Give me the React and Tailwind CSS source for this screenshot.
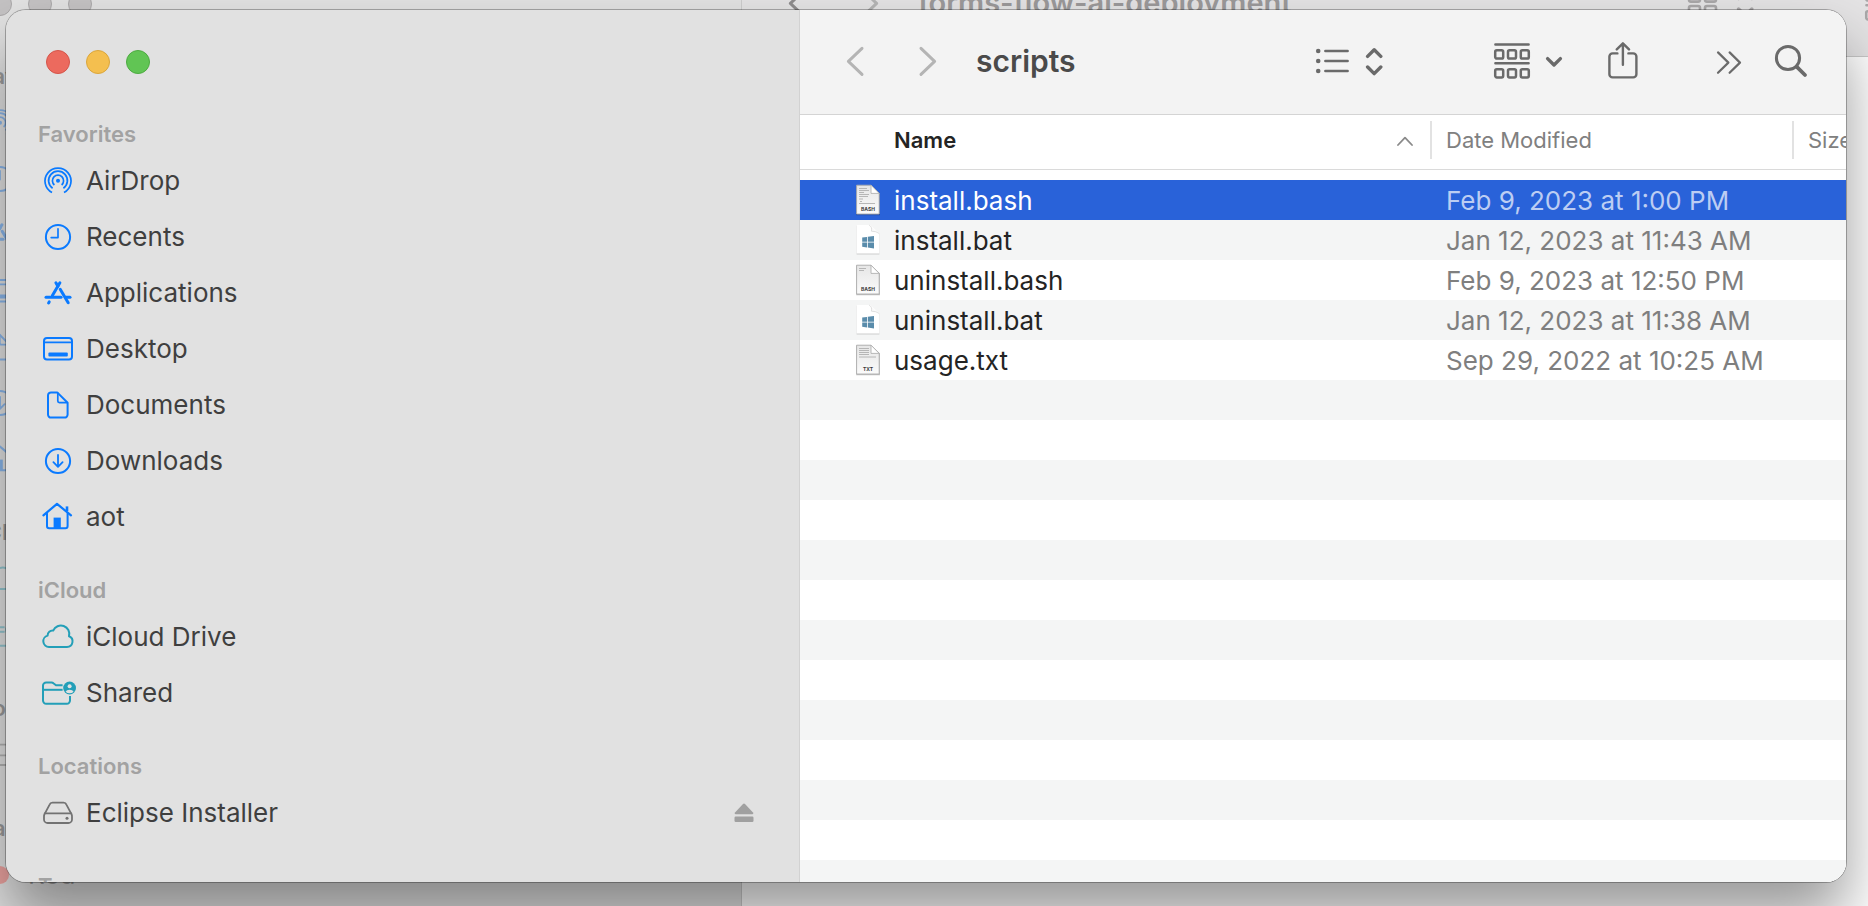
import React from "react";

const FONT = "font-['Inter','Noto_Sans',sans-serif]";

/* ---------- sidebar icons (36 x 36 box) ---------- */

function Glyph({ children, className }) {
  return (
    <svg
      viewBox="0 0 36 36"
      className={`h-9 w-9 shrink-0 ${className}`}
      fill="none"
      stroke="currentColor"
      strokeWidth="2"
      strokeLinecap="round"
      strokeLinejoin="round"
      aria-hidden="true"
    >
      {children}
    </svg>
  );
}

const AirDropIcon = (p) => (
  <Glyph {...p}>
    <g strokeWidth="1.7" strokeLinecap="butt">
      <path d="M12 29.6A13 13 0 1 1 24 29.6" />
      <path d="M12.6 25.3A9.4 9.4 0 1 1 23.4 25.3" />
      <path d="M14.4 22A5.6 5.6 0 1 1 21.6 22" />
    </g>
    <circle cx="18" cy="17.8" r="2" fill="currentColor" stroke="none" />
  </Glyph>
);

const RecentsIcon = (p) => (
  <Glyph {...p}>
    <circle cx="18" cy="18" r="12.1" />
    <path d="M18 9.8V18.6H11.2" strokeWidth="1.7" />
  </Glyph>
);

const ApplicationsIcon = (p) => (
  <Glyph {...p}>
    <g strokeWidth="3">
      <path d="M19.9 7.8 12.4 20.6" />
      <path d="M15.9 7.8 17.9 11.2" />
      <path d="M6 22.2H21" />
      <path d="M20.2 14.2 28.2 27.8" />
      <path d="M25.8 22.2H30" />
      <path d="M9.2 26.9 8.6 27.9" />
    </g>
  </Glyph>
);

const DesktopIcon = (p) => (
  <Glyph {...p}>
    <rect x="4" y="7" width="28" height="21.6" rx="3" />
    <path d="M4 11.4H32" strokeWidth="1.6" />
    <rect x="8.4" y="21.4" width="19.4" height="4" rx="1" fill="currentColor" stroke="none" />
  </Glyph>
);

const DocumentsIcon = (p) => (
  <Glyph {...p}>
    <path d="M11 5.4H17.2L27.6 15.8V27.6A3 3 0 0 1 24.6 30.6H11A3 3 0 0 1 8 27.6V8.4A3 3 0 0 1 11 5.4Z" />
    <path d="M17.8 6V14A1.6 1.6 0 0 0 19.4 15.6H27" strokeWidth="1.7" />
  </Glyph>
);

const DownloadsIcon = (p) => (
  <Glyph {...p}>
    <circle cx="18" cy="18" r="12.1" />
    <path d="M18 12V23.4M13.4 19.2 18 23.8 22.6 19.2" strokeWidth="1.8" />
  </Glyph>
);

const HomeIcon = (p) => (
  <Glyph {...p}>
    <path d="M3.4 16.4 17 4.8 31 16.4" strokeWidth="2.2" />
    <path d="M7 14.6V27A2.2 2.2 0 0 0 9.2 29.2H25.4A2.2 2.2 0 0 0 27.6 27V14.6" />
    <path d="M27 7.4V12" strokeWidth="2.6" strokeLinecap="butt" />
    <path d="M13.6 29V18.6H20.8V29Z" fill="currentColor" stroke="none" />
  </Glyph>
);

const CloudIcon = (p) => (
  <Glyph {...p}>
    <path d="M9 28H27A5.6 5.6 0 0 0 29 17.2 8.4 8.4 0 0 0 13.2 11.6 5 5 0 0 0 7.6 16.6 5.8 5.8 0 0 0 9 28Z" />
  </Glyph>
);

const SharedIcon = (p) => (
  <Glyph {...p}>
    <path
      d="M22.6 10.2H16L13.4 8.2A3 3 0 0 0 11.6 7.4H6.2A3.2 3.2 0 0 0 3 10.6V25.6A3.2 3.2 0 0 0 6.2 28.8H26.8A3.2 3.2 0 0 0 30 25.6V21"
      strokeLinecap="butt"
    />
    <path d="M3 14.8H22.6" strokeLinecap="butt" />
    <circle cx="29.6" cy="13" r="6.4" fill="currentColor" stroke="none" />
    <circle cx="29.6" cy="11.2" r="2" fill="#e1e1e1" stroke="none" />
    <path d="M25.6 16.8A4.2 3 0 0 1 33.6 16.8 6 6 0 0 1 25.6 16.8Z" fill="#e1e1e1" stroke="none" />
  </Glyph>
);

const DriveIcon = (p) => (
  <Glyph {...p}>
    <path
      d="M12.4 7.6H23.6A3 3 0 0 1 26.4 9.6L31.6 19.4A5 5 0 0 1 32 21.6V24.4A3.6 3.6 0 0 1 28.4 28H7.6A3.6 3.6 0 0 1 4 24.4V21.6A5 5 0 0 1 4.4 19.4L9.6 9.6A3 3 0 0 1 12.4 7.6Z"
      strokeWidth="1.8"
    />
    <path d="M4.6 18.4H31.4" strokeWidth="1.6" />
    <circle cx="27" cy="23.2" r="1.5" fill="currentColor" stroke="none" />
  </Glyph>
);

const RedTagIcon = (p) => (
  <Glyph {...p}>
    <circle cx="18" cy="18" r="9" fill="currentColor" stroke="none" />
  </Glyph>
);

/* ---------- sidebar ---------- */

const SECTIONS = [
  {
    title: "Favorites",
    items: [
      { label: "AirDrop", Icon: AirDropIcon, tone: "text-[#0a7aff]" },
      { label: "Recents", Icon: RecentsIcon, tone: "text-[#0a7aff]" },
      { label: "Applications", Icon: ApplicationsIcon, tone: "text-[#0a7aff]" },
      { label: "Desktop", Icon: DesktopIcon, tone: "text-[#0a7aff]" },
      { label: "Documents", Icon: DocumentsIcon, tone: "text-[#0a7aff]" },
      { label: "Downloads", Icon: DownloadsIcon, tone: "text-[#0a7aff]" },
      { label: "aot", Icon: HomeIcon, tone: "text-[#0a7aff]" },
    ],
  },
  {
    title: "iCloud",
    items: [
      { label: "iCloud Drive", Icon: CloudIcon, tone: "text-[#239fb8]" },
      { label: "Shared", Icon: SharedIcon, tone: "text-[#239fb8]" },
    ],
  },
  {
    title: "Locations",
    items: [
      { label: "Eclipse Installer", Icon: DriveIcon, tone: "text-[#727272]", ejectable: true },
    ],
  },
  {
    title: "Tags",
    items: [{ label: "Red", Icon: RedTagIcon, tone: "text-[#ff4a42]" }],
  },
];

/* The window behind lists the same places; only the tag name shows past the front window. */
const BACK_SECTIONS = SECTIONS.map((section) => ({
  ...section,
  items: section.items.map((item) => ({
    ...item,
    iconOnly: section.title !== "Tags",
    ejectable: false,
  })),
}));

function TrafficLights({ active }) {
  const lights = active
    ? ["bg-[#ec6a5e] border-[#d5554a]", "bg-[#f4bf4f] border-[#dba63b]", "bg-[#61c554] border-[#4dab41]"]
    : ["bg-[#c4c2c3] border-[#aaa8a9]", "bg-[#c4c2c3] border-[#aaa8a9]", "bg-[#c4c2c3] border-[#aaa8a9]"];
  const names = ["Close", "Minimize", "Zoom"];
  return (
    <div className="flex h-[105px] shrink-0 items-center gap-4 pb-0.5 pl-10">
      {names.map((name, i) => (
        <button key={name} aria-label={name} className={`h-6 w-6 rounded-full border ${lights[i]}`} />
      ))}
    </div>
  );
}

function Sidebar({ active }) {
  const sections = active ? SECTIONS : BACK_SECTIONS;
  return (
    <aside
      className={`flex w-[794px] shrink-0 flex-col overflow-hidden border-r ${
        active ? "border-[#d2d2d2] bg-[#e1e1e1]" : "border-[#cccccc] bg-[#e2e2e2]"
      }`}
    >
      <TrafficLights active={active} />
      <nav className={`flex flex-col gap-[26px] ${active ? "" : "opacity-40"}`}>
        {sections.map((section) => (
          <section key={section.title}>
            <h2
              className={`h-[38px] pl-8 text-[22px] leading-[38px] font-semibold ${
                active ? "text-[#a2a2a2]" : "text-[#333333]"
              }`}
            >
              {section.title}
            </h2>
            <ul>
              {section.items.map(({ label, Icon, tone, ejectable, iconOnly }) => (
                <li key={label} className="flex h-14 items-center justify-between pr-[45px] pl-[34px]">
                  <a
                    href="#"
                    aria-label={label}
                    className="flex items-center gap-2.5 text-[26px] leading-8 text-[#3f3f3f]"
                  >
                    <Icon className={tone} />
                    {!iconOnly && label}
                  </a>
                  {ejectable && (
                    <button aria-label={`Eject ${label}`} className="text-[#a0a0a0]">
                      <svg viewBox="0 0 20 20" className="h-5 w-5" fill="currentColor" aria-hidden="true">
                        <path d="M9 1Q10 0 11 1L19 9.4Q20 11 18.4 11.2H1.6Q0 11 1 9.4Z" />
                        <rect x="0.5" y="13.6" width="19" height="5.4" rx="1.2" />
                      </svg>
                    </button>
                  )}
                </li>
              ))}
            </ul>
          </section>
        ))}
      </nav>
    </aside>
  );
}

/* ---------- toolbar ---------- */

function Stroke({ box, className, width = 3, children }) {
  return (
    <svg
      viewBox={box}
      className={`shrink-0 ${className}`}
      fill="none"
      stroke="currentColor"
      strokeWidth={width}
      strokeLinecap="round"
      strokeLinejoin="round"
      aria-hidden="true"
    >
      {children}
    </svg>
  );
}

const ListViewIcon = () => (
  <Stroke box="0 0 36 28" className="h-7 w-9" width={2.6}>
    <path d="M10.4 3H32.6M10.4 13H32.6M10.4 23H32.6" />
    <g fill="currentColor" stroke="none">
      <circle cx="3.2" cy="3" r="2.3" />
      <circle cx="3.2" cy="13" r="2.3" />
      <circle cx="3.2" cy="23" r="2.3" />
    </g>
  </Stroke>
);

const GridViewIcon = () => (
  <Stroke box="0 0 36 28" className="h-7 w-9" width={2.6}>
    <rect x="3" y="1.6" width="11" height="10" rx="2" />
    <rect x="19" y="1.6" width="11" height="10" rx="2" />
    <rect x="3" y="16" width="11" height="10" rx="2" />
    <rect x="19" y="16" width="11" height="10" rx="2" />
  </Stroke>
);

const GroupIcon = () => (
  <Stroke box="0 0 38 38" className="h-[38px] w-[38px]" width={2.5}>
    <path d="M2.4 1.6H35.6M2.4 20.3H35.6" />
    <rect x="2.2" y="7.3" width="8" height="8.2" rx="1.6" />
    <rect x="15" y="7.3" width="8" height="8.2" rx="1.6" />
    <rect x="27.8" y="7.3" width="8" height="8.2" rx="1.6" />
    <rect x="2.2" y="26.2" width="8" height="8.2" rx="1.6" />
    <rect x="15" y="26.2" width="8" height="8.2" rx="1.6" />
    <rect x="27.8" y="26.2" width="8" height="8.2" rx="1.6" />
  </Stroke>
);

function Toolbar({ title, active }) {
  return (
    <header
      className={`flex h-[105px] shrink-0 items-center border-b pr-[38px] pl-[45px] ${
        active ? "border-[#d4d4d4] bg-[#f3f3f3] text-[#6a6a6a]" : "border-[#c8c8c8] bg-[#e4e3e4] text-[#a9a7a8]"
      }`}
    >
      <div className="flex gap-[53px]">
        <button aria-label="Back" className={active ? "text-[#b4b4b4]" : "text-[#8e8c8d]"}>
          <Stroke box="0 0 20 32" className="h-8 w-5">
            <path d="M17 2.4 3.4 15.4 17 28.4" />
          </Stroke>
        </button>
        <button aria-label="Forward" className="text-[#b4b4b4]">
          <Stroke box="0 0 20 32" className="h-8 w-5">
            <path d="M3 2.4 16.6 15.4 3 28.4" />
          </Stroke>
        </button>
      </div>
      <h1
        className={`ml-[38px] pb-0.5 leading-9 font-semibold whitespace-nowrap ${
          active ? "text-[30px] text-[#4a4a4a]" : "text-[29px] text-[#9b999a]"
        }`}
      >
        {title}
      </h1>

      <div className="ml-auto flex shrink-0 items-center">
        <button aria-label="View" className="flex items-center gap-3.5">
          {active ? <ListViewIcon /> : <GridViewIcon />}
          <Stroke box="0 0 18 30" className="h-[30px] w-[18px]" width={3.4}>
            <path d="M2.6 9.4 9.2 2.8 15.8 9.4M2.6 20 9.2 26.6 15.8 20" />
          </Stroke>
        </button>
        <button aria-label="Group" className="ml-[110px] flex items-center gap-3.5">
          <GroupIcon />
          <Stroke box="0 0 18 12" className="h-3 w-[18px]" width={3.4}>
            <path d="M2.6 2.6 9 9 15.4 2.6" />
          </Stroke>
        </button>
        <button aria-label="Share" className="ml-11">
          <Stroke box="0 0 32 40" className="h-10 w-8" width={2.4}>
            <path d="M10.4 11.4H5.6A3.2 3.2 0 0 0 2.4 14.6V32.2A3.2 3.2 0 0 0 5.6 35.4H26.2A3.2 3.2 0 0 0 29.4 32.2V14.6A3.2 3.2 0 0 0 26.2 11.4H21.4" />
            <path d="M15.9 22.8V1.4M9.8 7.4 15.9 1.3 22 7.4" />
          </Stroke>
        </button>
        <button aria-label="More toolbar items" className="ml-[76px]">
          <Stroke box="0 0 28 26" className="h-[26px] w-7" width={2.2}>
            <path d="M3 3.4 13.4 13.6 3 23.8M14.6 3.4 25 13.6 14.6 23.8" />
          </Stroke>
        </button>
        <button aria-label="Search" className="ml-[31px]">
          <Stroke box="0 0 34 36" className="h-9 w-[34px]" width={3}>
            <circle cx="14" cy="14" r="11.6" />
            <path d="M22.6 22.6 31 31" strokeWidth="3.8" />
          </Stroke>
        </button>
      </div>
    </header>
  );
}

/* ---------- file icons ---------- */

function TextFileIcon({ kind, lines }) {
  return (
    <svg viewBox="0 0 26 32" className="h-8 w-[26px] shrink-0" aria-hidden="true">
      <defs>
        <linearGradient id={`page-${kind}`} x1="0" y1="0" x2="0" y2="1">
          <stop offset="0" stopColor="#e6e6e6" />
          <stop offset="1" stopColor="#fbfbfb" />
        </linearGradient>
      </defs>
      <path d="M1.2 1.4H16.4L25 9.6V31.2H1.2Z" fill="#000" opacity="0.24" />
      <path d="M1.6 1.2H16L24.2 9.4V30H1.6Z" fill={`url(#page-${kind})`} stroke="#acacac" strokeWidth="0.9" />
      <path d="M16 1.2 24.2 9.4H16Z" fill="#fff" stroke="#b0b0b0" strokeWidth="0.9" strokeLinejoin="round" />
      <path d={lines} stroke="#b0b0b0" strokeWidth="0.9" fill="none" />
      <text
        x="13"
        y="27.2"
        textAnchor="middle"
        fill="#3a3a3a"
        className="font-['Inter',sans-serif] text-[5px] font-bold"
      >
        {kind}
      </text>
    </svg>
  );
}

function BatchFileIcon() {
  return (
    <svg viewBox="0 0 26 32" className="h-8 w-[26px] shrink-0" aria-hidden="true">
      <path d="M1.6 1.6H15L24.4 10V30.6H1.6Z" fill="#000" opacity="0.16" />
      <path d="M1.6 1H15.4L24.4 9.4V29.6H1.6Z" fill="#ffffff" />
      <path d="M14 1Q17.4 2.6 16.4 7.2 21 7 24.4 9.6" fill="#fafafa" stroke="#d9d9d9" strokeWidth="0.8" />
      <g fill="#5a8cab">
        <path d="M7.2 13.6 12 12.9V17.8H7.2Z" />
        <path d="M12.8 12.8 19 11.9V17.8H12.8Z" />
        <path d="M7.2 18.6H12V23.4L7.2 22.7Z" />
        <path d="M12.8 18.6H19V24.4L12.8 23.5Z" />
      </g>
    </svg>
  );
}

const FULL_LINES = "M4 4.5H12M4 6.5H14M4 8.5H9M4 10.5H14M4 12.5H13M4 15H8M5 17.5H7M4 19.5H20";
const SHORT_LINES = "M4 4.5H11M4 6.5H9";
const TXT_LINES = "M4 4.5H14M4 6.5H14M4 8.5H14M4 10.5H14M4 13H21";

const FILES = [
  { name: "install.bash", date: "Feb 9, 2023 at 1:00 PM", kind: "BASH", lines: FULL_LINES, selected: true },
  { name: "install.bat", date: "Jan 12, 2023 at 11:43 AM" },
  { name: "uninstall.bash", date: "Feb 9, 2023 at 12:50 PM", kind: "BASH", lines: SHORT_LINES },
  { name: "uninstall.bat", date: "Jan 12, 2023 at 11:38 AM" },
  { name: "usage.txt", date: "Sep 29, 2022 at 10:25 AM", kind: "TXT", lines: TXT_LINES },
];

function FileTable() {
  return (
    <div className="flex min-h-0 flex-1 flex-col bg-white">
      <table className="w-full table-fixed border-collapse text-left">
        <colgroup>
          <col />
          <col className="w-[362px]" />
          <col className="w-[54px]" />
        </colgroup>
        <thead className="text-[22px] leading-[38px] text-[#808080]">
          <tr>
            <th scope="col" aria-sort="ascending" className="p-0 pb-2.5 font-semibold text-[#242424]">
              <div className="flex h-[55px] items-center justify-between border-b border-[#dadada] pr-4 pb-1 pl-[94px]">
                Name
                <Stroke box="0 0 18 12" className="h-3 w-[18px] text-[#8a8a8a]" width={1.8}>
                  <path d="M2 11 9 3.6 16 11" />
                </Stroke>
              </div>
            </th>
            <th scope="col" className="p-0 pb-2.5 font-normal">
              <div className="flex h-[55px] items-center border-b border-[#dadada] pb-1">
                <span className="border-l-2 border-[#e2e2e2] pl-3.5">Date Modified</span>
              </div>
            </th>
            <th scope="col" className="p-0 pb-2.5 font-normal">
              <div className="flex h-[55px] items-center overflow-hidden border-b border-[#dadada] pb-1">
                <span className="border-l-2 border-[#e2e2e2] pl-3.5">Size</span>
              </div>
            </th>
          </tr>
        </thead>
        <tbody className="text-[26px] leading-8">
          {FILES.map((file) => (
            <tr
              key={file.name}
              className={file.selected ? "h-10 bg-[#2962d9] text-white" : "h-10 text-[#242424] even:bg-[#f4f5f5]"}
            >
              <td className="p-0">
                <div className="flex items-center gap-[13px] pl-[55px]">
                  {file.kind ? <TextFileIcon kind={file.kind} lines={file.lines} /> : <BatchFileIcon />}
                  <span className="pt-0.5">{file.name}</span>
                </div>
              </td>
              <td
                className={`p-0 pt-0.5 pl-4 whitespace-nowrap ${file.selected ? "text-[#bccdf3]" : "text-[#7f7f7f]"}`}
              >
                {file.date}
              </td>
              <td className="p-0" />
            </tr>
          ))}
        </tbody>
      </table>
      <div className="flex-1 bg-[repeating-linear-gradient(to_bottom,#f4f5f5_0px,#f4f5f5_40px,#ffffff_40px,#ffffff_80px)]" />
    </div>
  );
}

/* ---------- desktop ---------- */

function FinderWindow({ title, active, className, children }) {
  return (
    <div className={`absolute flex overflow-hidden rounded-[20px] ${className}`}>
      <Sidebar active={active} />
      <main className="flex min-w-0 flex-1 flex-col bg-white">
        <Toolbar title={title} active={active} />
        {children}
      </main>
    </div>
  );
}

export default function App() {
  return (
    <div className={`relative h-screen w-full overflow-hidden bg-[#e2e2e2] ${FONT}`}>
      <FinderWindow
        title="forms-flow-ai-deployment"
        active={false}
        className="-top-12 -right-[349px] -bottom-24 -left-[52px]"
      />
      <FinderWindow
        title="scripts"
        active
        className="top-2.5 right-[22px] bottom-6 left-1.5 shadow-[0_0_0_1px_rgba(0,0,0,0.28),0_36px_60px_rgba(0,0,0,0.4)]"
      >
        <FileTable />
      </FinderWindow>
    </div>
  );
}
